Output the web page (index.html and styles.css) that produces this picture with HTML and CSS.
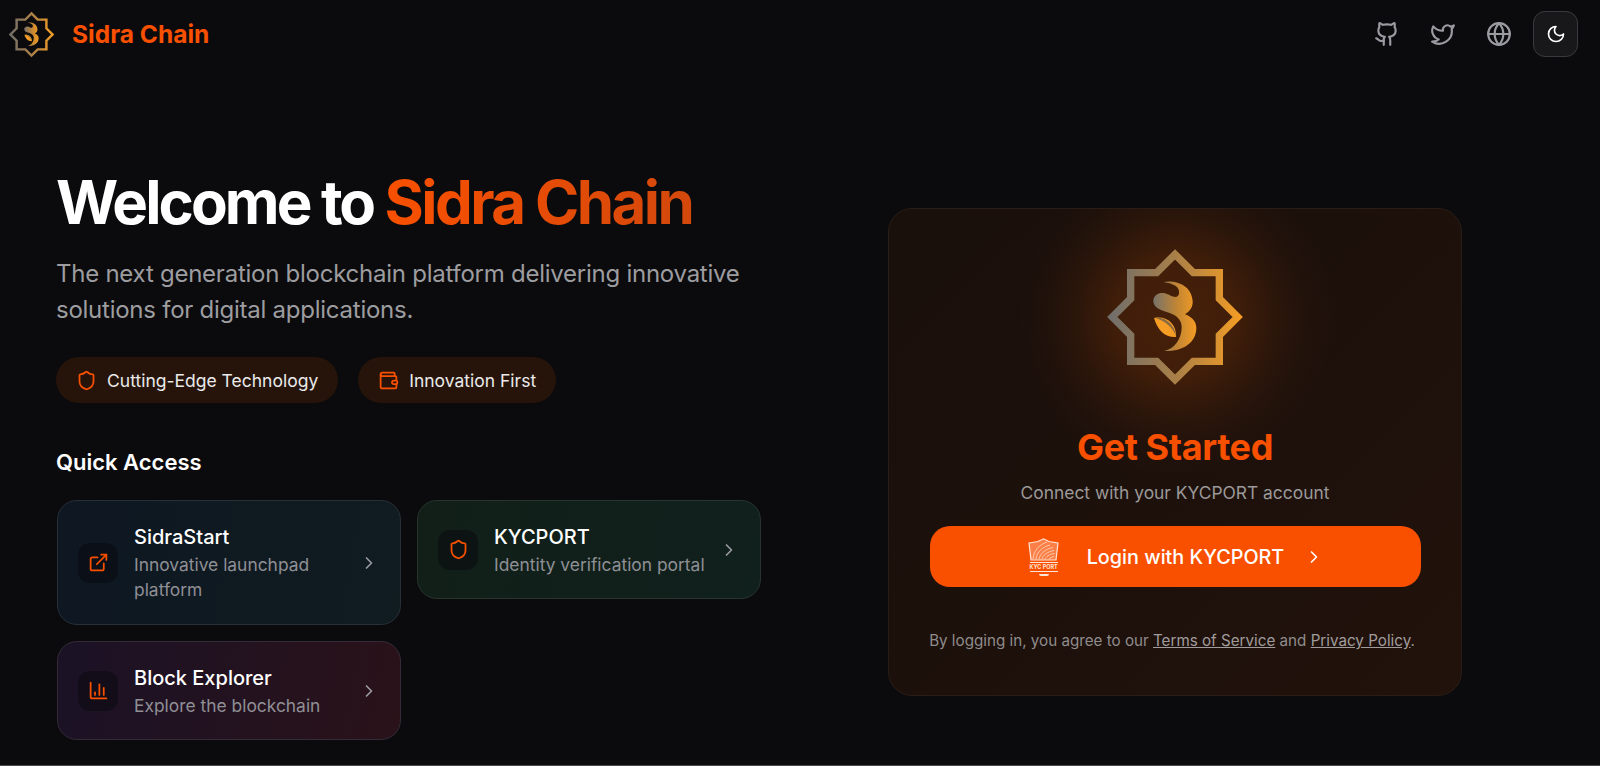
FILE: index.html
```html
<!DOCTYPE html>
<html lang="en">
<head>
<meta charset="utf-8">
<title>Sidra Chain</title>
<link rel="stylesheet" href="styles.css">
</head>
<body>
<svg class="defs" width="0" height="0" aria-hidden="true">
  <defs>
    <linearGradient id="goldA" gradientUnits="userSpaceOnUse" x1="-200" y1="0" x2="200" y2="0">
      <stop offset="0" stop-color="#6f6e6c"/><stop offset=".5" stop-color="#a87f48"/><stop offset="1" stop-color="#f59d24"/>
    </linearGradient>
    <linearGradient id="goldB" gradientUnits="userSpaceOnUse" x1="-65" y1="0" x2="60" y2="0">
      <stop offset="0" stop-color="#77726b"/><stop offset=".55" stop-color="#bf8535"/><stop offset="1" stop-color="#f19a24"/>
    </linearGradient>
    <symbol id="sidra" viewBox="-210 -210 420 420">
      <polygon points="0,-188 55,-133 133,-133 133,-55 188,0 133,55 133,133 55,133 0,188 -55,133 -133,133 -133,55 -188,0 -133,-55 -133,-133 -55,-133" fill="none" stroke="url(#goldA)" stroke-width="22"/>
      <path d="M-35,-105 C-5,-112 50,-100 53,-48 C54,-30 45,-18 30,-8 C52,0 65,15 64,35 C62,80 20,104 -33,102 C0,95 20,65 20,30 C20,5 0,-8 -25,-15 C-50,-22 -66,-32 -65,-50 C-64,-66 -48,-74 -35,-72 C-20,-70 -10,-60 2,-60 C12,-62 15,-72 10,-84 C4,-96 -15,-102 -35,-105 Z" fill="url(#goldB)"/>
      <path d="M-63,3 C-25,-5 5,20 3,60 C-30,62 -52,40 -63,3 Z" fill="#f59d24"/>
      <path d="M-60,3 C-30,-2 -2,22 3,56 C-10,28 -32,10 -60,3 Z" fill="#8a6a42"/>
    </symbol>
  </defs>
</svg>
<div class="page">
  <header class="topbar">
    <a class="brand">
      <svg class="brand-logo"><use href="#sidra"/></svg>
      <span class="brand-name">Sidra Chain</span>
    </a>
    <nav class="top-actions">
      <a class="top-icon"><svg viewBox="0 0 24 24"><path d="M15 22v-4a4.800 4.800 0 0 0-1-3.500c3 0 6-2 6-5.500.08-1.250-.27-2.480-1-3.500.28-1.150.28-2.350 0-3.500 0 0-1 0-3 1.500-2.640-.5-5.360-.5-8 0C6 2 5 2 5 2c-.3 1.150-.3 2.350 0 3.500A5.403 5.403 0 0 0 4 9c0 3.500 3 5.500 6 5.500-.39.49-.68 1.050-.85 1.650-.17.6-.22 1.230-.15 1.850v4"/><path d="M9 18c-4.510 2-5-2-7-2"/></svg></a>
      <a class="top-icon"><svg viewBox="0 0 24 24"><path d="M22 4s-.7 2.100-2 3.400c1.600 10-9.400 17.300-18 11.600 2.200.1 4.400-.6 6-2C3 15.500.5 9.600 3 5c2.200 2.600 5.600 4.100 9 4-.9-4.200 4-6.600 7-3.800 1.100 0 3-1.200 3-1.200z"/></svg></a>
      <a class="top-icon"><svg viewBox="0 0 24 24"><circle cx="12" cy="12" r="10"/><path d="M12 2a14.500 14.500 0 0 0 0 20 14.500 14.500 0 0 0 0-20"/><path d="M2 12h20"/></svg></a>
      <button class="theme-btn"><svg viewBox="0 0 24 24"><path d="M12 3a6 6 0 0 0 9 9 9 9 0 1 1-9-9Z"/></svg></button>
    </nav>
  </header>
  <main class="hero">
    <section class="intro">
      <h1 class="headline">Welcome to <span class="accent">Sidra Chain</span></h1>
      <p class="lede">The next generation blockchain platform delivering innovative solutions for digital applications.</p>
      <div class="pills">
        <div class="pill"><svg class="ico" viewBox="0 0 24 24"><path d="M20 13c0 5-3.500 7.500-7.660 8.950a1 1 0 0 1-.67-.01C7.500 20.500 4 18 4 13V6a1 1 0 0 1 1-1c2 0 4.500-1.200 6.240-2.720a1.170 1.170 0 0 1 1.520 0C14.510 3.810 17 5 19 5a1 1 0 0 1 1 1z"/></svg><span>Cutting-Edge Technology</span></div>
        <div class="pill"><svg class="ico" viewBox="0 0 24 24"><path d="M19 7V4a1 1 0 0 0-1-1H5a2 2 0 0 0 0 4h15a1 1 0 0 1 1 1v4h-3a2 2 0 0 0 0 4h3a1 1 0 0 0 1-1v-2a1 1 0 0 0-1-1"/><path d="M3 5v14a2 2 0 0 0 2 2h15a1 1 0 0 0 1-1v-4"/></svg><span>Innovation First</span></div>
      </div>
      <h2 class="quick-title">Quick Access</h2>
      <div class="quick-grid">
        <a class="quick-card blue">
          <span class="quick-icon"><svg class="ico" viewBox="0 0 24 24"><path d="M15 3h6v6"/><path d="M10 14 21 3"/><path d="M18 13v6a2 2 0 0 1-2 2H5a2 2 0 0 1-2-2V8a2 2 0 0 1 2-2h6"/></svg></span>
          <span class="quick-text"><strong>SidraStart</strong><small>Innovative launchpad platform</small></span>
          <svg class="chev" viewBox="0 0 24 24"><path d="m9 18 6-6-6-6"/></svg>
        </a>
        <a class="quick-card green">
          <span class="quick-icon"><svg class="ico" viewBox="0 0 24 24"><path d="M20 13c0 5-3.500 7.500-7.660 8.950a1 1 0 0 1-.67-.01C7.500 20.500 4 18 4 13V6a1 1 0 0 1 1-1c2 0 4.500-1.200 6.240-2.720a1.170 1.170 0 0 1 1.520 0C14.510 3.810 17 5 19 5a1 1 0 0 1 1 1z"/></svg></span>
          <span class="quick-text"><strong>KYCPORT</strong><small>Identity verification portal</small></span>
          <svg class="chev" viewBox="0 0 24 24"><path d="m9 18 6-6-6-6"/></svg>
        </a>
        <a class="quick-card purple">
          <span class="quick-icon"><svg class="ico" viewBox="0 0 24 24"><path d="M3 3v16a2 2 0 0 0 2 2h16"/><path d="M18 17V9"/><path d="M13 17V5"/><path d="M8 17v-3"/></svg></span>
          <span class="quick-text"><strong>Block Explorer</strong><small>Explore the blockchain</small></span>
          <svg class="chev" viewBox="0 0 24 24"><path d="m9 18 6-6-6-6"/></svg>
        </a>
      </div>
    </section>
    <aside class="login-card">
      <div class="glow"></div>
      <svg class="login-logo"><use href="#sidra"/></svg>
      <h2 class="login-title">Get Started</h2>
      <p class="login-sub">Connect with your KYCPORT account</p>
      <button class="login-btn">
        <span class="kyc-badge">
          <svg class="kyc-shield" viewBox="0 0 31 23"><path d="M1 5 L10 3.500 L15.500 .8 L21 3.500 L30 5 L28 22 L3 22 Z" fill="#fb8048" stroke="#ffe6d8" stroke-width="1.200"/><path d="M5 21 C6 12 11 7 19 4 M8 21 C9 14 14 9 22 7 M11 21 C12 16 17 11 25 9.500 M14 21 C15 17 19 14 26 12.500 M17 21 C18 19 21 16 26.500 15.500 M21 21 C22 20 24 19 26 18.500" fill="none" stroke="#ffd9c4" stroke-width=".8"/></svg>
          <span class="kyc-word">KYC PORT</span>
          <span class="kyc-foot"></span>
        </span>
        <span class="login-label">Login with KYCPORT</span>
        <svg class="chev-white" viewBox="0 0 24 24"><path d="m9 18 6-6-6-6"/></svg>
      </button>
      <p class="legal">By logging in, you agree to our <a>Terms of Service</a> and <a>Privacy Policy</a>.</p>
    </aside>
  </main>
</div>
</body>
</html>
```
FILE: styles.css
```css
* { box-sizing: border-box; }
html, body { margin: 0; height: 100%; }
body {
  background: #0b0b0d;
  color: #fff;
  font-family: Inter, "Liberation Sans", sans-serif;
  overflow: hidden;
}
.defs { position: absolute; }
.page { height: 766px; border-bottom: 1px solid #4a4a4c; overflow: hidden; }
svg { display: block; }

.topbar {
  height: 71px;
  padding: 11px 22px 0 8px;
  display: flex;
  justify-content: space-between;
  align-items: flex-start;
}
.brand { display: flex; align-items: center; gap: 17px; height: 46px; }
.brand-logo { width: 47px; height: 47px; }
.brand-name { font-size: 24.500px; font-weight: 700; color: #f95000; }
.top-actions { display: flex; align-items: center; gap: 8px; height: 46px; }
.top-icon { width: 48px; height: 46px; display: flex; align-items: center; justify-content: center; }
.top-icon svg { width: 26px; height: 26px; fill: none; stroke: #9b9ba2; stroke-width: 2; stroke-linecap: round; stroke-linejoin: round; }
.theme-btn {
  width: 45px; height: 46px; padding: 0; margin-left: 2px;
  background: #18181b; border: 1px solid #3a3a3e; border-radius: 12px;
  display: flex; align-items: center; justify-content: center;
}
.theme-btn svg { width: 20px; height: 20px; fill: none; stroke: #fff; stroke-width: 2; stroke-linecap: round; stroke-linejoin: round; }

.hero { display: flex; padding-left: 56px; }
.intro { width: 705px; padding-top: 95px; }
.headline { margin: 0; font-size: 60px; line-height: 72px; font-weight: 700; letter-spacing: -2.900px; }
.accent { letter-spacing: -2.600px; background: linear-gradient(90deg, #f95000, #d4480c); -webkit-background-clip: text; background-clip: text; color: transparent; }
.lede { margin: 18px 0 0; font-size: 24px; line-height: 36px; color: #9d9da0; font-weight: 400; letter-spacing: -.25px; }
.pills { display: flex; gap: 20px; margin-top: 29px; }
.pill {
  height: 46px; padding: 0 20px;
  display: flex; align-items: center; gap: 10px;
  background: #26140b; border-radius: 23px;
  font-size: 17.500px; font-weight: 400; color: #eaeaea;
}
.ico { width: 21px; height: 21px; fill: none; stroke: #f95000; stroke-width: 2; stroke-linecap: round; stroke-linejoin: round; }
.quick-title { margin: 43px 0 0; font-size: 22px; line-height: 32px; font-weight: 600; }
.quick-grid {
  margin: 22px 0 0 1px;
  display: grid; grid-template-columns: 344px 344px; gap: 16px;
  align-items: start;
}
.quick-card {
  display: flex; align-items: center; gap: 16px;
  padding: 20px 21px 20px 20px;
  border-radius: 20px;
  border: 1px solid #2a2f35;
}
.quick-card.blue { background: linear-gradient(100deg, #0e1722, #101c20); border-color: #263039; height: 125px; }
.quick-card.green { background: linear-gradient(100deg, #121f19, #10201c); border-color: #28352e; height: 99px; }
.quick-card.purple { background: linear-gradient(100deg, #1b1226, #2a1219); border-color: #352a38; height: 99px; }
.quick-icon {
  width: 40px; height: 40px; flex: none;
  display: flex; align-items: center; justify-content: center;
  background: rgba(10,10,14,.55); border-radius: 12px;
}
.quick-text { flex: 1; min-width: 0; display: flex; flex-direction: column; }
.quick-text strong { font-size: 20px; line-height: 29px; font-weight: 500; }
.quick-text small { font-size: 17.400px; line-height: 25px; color: #8f8f95; }
.chev { width: 20px; height: 20px; flex: none; margin-left: -8px; fill: none; stroke: #9b9ba2; stroke-width: 2; stroke-linecap: round; stroke-linejoin: round; }

.login-card {
  position: relative;
  margin: 137px 0 0 127px;
  width: 574px; height: 488px;
  padding: 0 41px;
  border-radius: 24px;
  border: 1px solid #2a1d15;
  background: linear-gradient(135deg, #190f0b, #21120b);
  display: flex; flex-direction: column; align-items: center;
  overflow: hidden;
}
.glow {
  position: absolute; left: 126px; top: -52px; width: 320px; height: 320px;
  border-radius: 50%;
  background: radial-gradient(circle closest-side, rgba(251,100,0,.19) 0%, rgba(251,100,0,.16) 38%, rgba(251,100,0,.07) 62%, rgba(251,100,0,.02) 82%, rgba(251,100,0,0) 100%);
}
.login-logo { position: relative; width: 140px; height: 140px; margin-top: 38px; flex: none; }
.login-title { position: relative; margin: 38px 0 0; font-size: 36px; line-height: 44px; font-weight: 700; color: #f95000; letter-spacing: -.4px; }
.login-sub { margin: 12px 0 0; font-size: 17.400px; line-height: 24px; color: #9b9999; }
.login-btn {
  margin-top: 21px;
  width: 491px; height: 61px; flex: none;
  border: 0; border-radius: 20px;
  background: #f95000; color: #fff;
  display: flex; align-items: center; justify-content: center; gap: 24px;
  font: 500 19.800px/28px Inter, "Liberation Sans", sans-serif;
}
.kyc-badge { display: flex; flex-direction: column; align-items: center; width: 36px; margin-right: 1px; }
.kyc-shield { width: 31px; height: 23px; }
.kyc-word { margin-top: 1px; padding: 1px 0; border-top: 1px solid #ffe6d8; border-bottom: 1px solid #ffe6d8; font-size: 5.500px; line-height: 6px; font-weight: 700; color: #ffe6d8; white-space: nowrap; }
.kyc-foot { width: 10px; height: 2px; margin-top: 2px; border-radius: 0 0 6px 6px; background: #ffe6d8; }
.chev-white { width: 20px; height: 20px; margin-left: -4px; fill: none; stroke: #fff; stroke-width: 2; stroke-linecap: round; stroke-linejoin: round; }
.legal { margin: 44px 6px 0 0; font-size: 15.200px; line-height: 20px; color: #8f8c8c; white-space: nowrap; }
.legal a { text-decoration: underline; color: #a09c9c; }
```
